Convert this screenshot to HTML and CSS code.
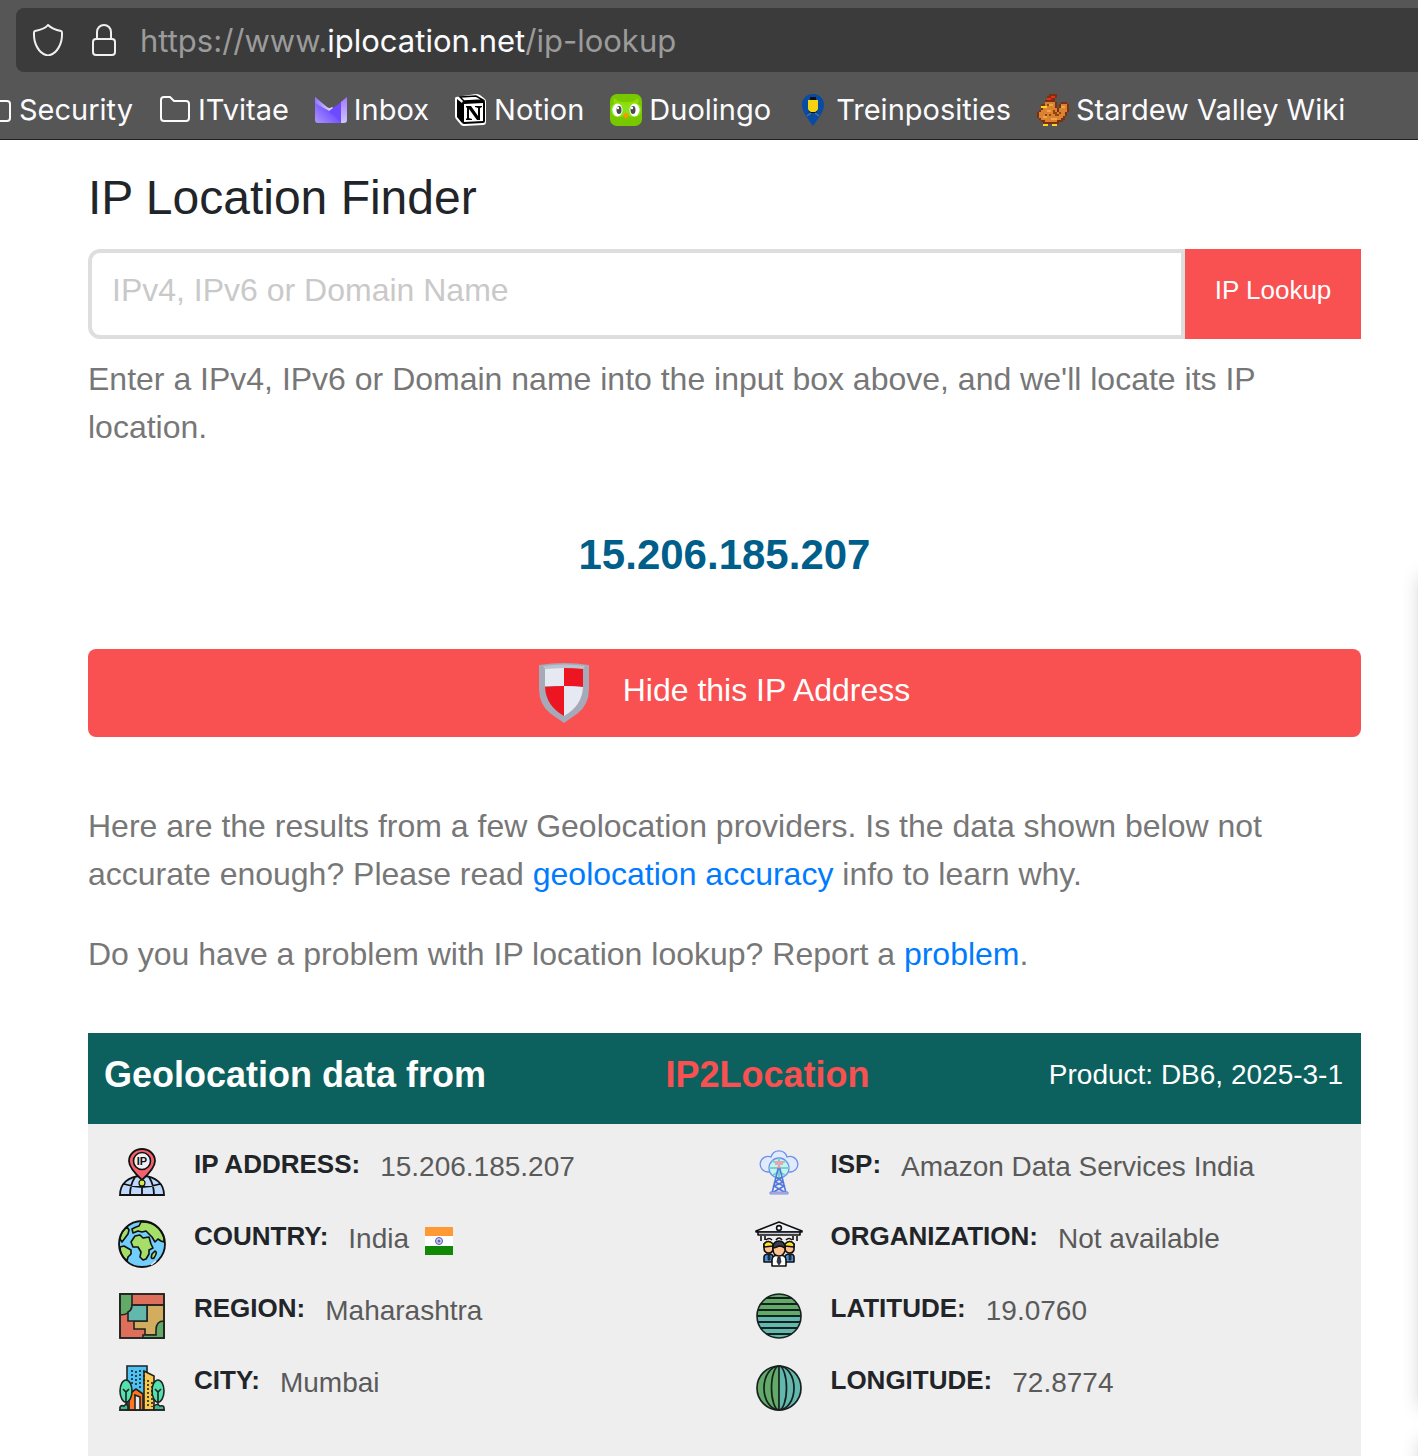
FILE: index.html
```html
<!DOCTYPE html>
<html lang="en">
<head>
<meta charset="utf-8">
<meta name="viewport" content="width=device-width, initial-scale=1">
<title>IP Location Finder</title>
<link rel="stylesheet" href="styles.css">
</head>
<body>
<header class="browser">
  <div class="urlbar">
    <svg class="url-icon" viewBox="0 0 32 32" fill="none" stroke="#f0f0f0" stroke-width="2" stroke-linejoin="round" aria-hidden="true"><path d="M16 1C13 5 8 6 3 7C1.5 7.500 2 9 2 11C2 20 7 29 14 31C15.300 31.500 16.700 31.500 18 31C25 29 30 20 30 11C30 9 30.500 7.500 29 7C24 6 19 4 16 1Z"/></svg>
    <svg class="url-icon" viewBox="0 0 32 32" fill="none" stroke="#f0f0f0" stroke-width="2" aria-hidden="true"><rect x="5" y="15" width="22" height="16" rx="3"/><path d="M9 15V8a7 7 0 0 1 14 0V15"/></svg>
    <span class="url">https://www.<b class="domain">iplocation.net</b>/ip-lookup</span>
  </div>
  <nav class="bookmarks" aria-label="Bookmarks">
    <a class="bookmark" href="#"><svg class="bm-clipped" viewBox="20 0 12 32" fill="none" stroke="#fbfbfe" stroke-width="2" aria-hidden="true"><path d="M2 24V6a3 3 0 0 1 3-3h6l4 4h12a3 3 0 0 1 3 3v14a3 3 0 0 1-3 3H5a3 3 0 0 1-3-3Z"/></svg>Security</a>
    <a class="bookmark" href="#"><svg class="bm-icon" viewBox="0 0 32 32" fill="none" stroke="#fbfbfe" stroke-width="2" aria-hidden="true"><path d="M2 24V6a3 3 0 0 1 3-3h6l4 4h12a3 3 0 0 1 3 3v14a3 3 0 0 1-3 3H5a3 3 0 0 1-3-3Z"/></svg>ITvitae</a>
    <a class="bookmark" href="#"><svg class="bm-icon" viewBox="0 0 32 32" aria-hidden="true"><defs><linearGradient id="mailLeft" x1="0" y1="1" x2="1" y2="0"><stop offset="0" stop-color="#ad96ff"/><stop offset=".6" stop-color="#6d4aff"/></linearGradient><linearGradient id="mailFold" x1="0" y1="0" x2="1" y2="0"><stop offset="0" stop-color="#8f75ff"/><stop offset="1" stop-color="#e6dcff"/></linearGradient><linearGradient id="mailRight" x1="0" y1="0" x2="0" y2="1"><stop offset="0" stop-color="#a07aff"/><stop offset="1" stop-color="#d0c4ff"/></linearGradient></defs><path d="M0 3V26a3 3 0 0 0 3 3H26V9L13 17Z" fill="url(#mailLeft)"/><path d="M0 3L12 13Q14.500 15 17 13L18 14L14 17L0 9Z" fill="url(#mailFold)"/><path d="M32 3L14 18L20 22L26 29V9Z" fill="#6d4aff"/><path d="M32 3V26a3 3 0 0 1-3 3H26V8Z" fill="url(#mailRight)"/></svg>Inbox</a>
    <a class="bookmark" href="#"><svg class="bm-icon" viewBox="0 0 32 32" aria-hidden="true"><path d="M1 3L21 0Q23 0 25 1L30 5Q31 6 31 7V28Q31 31 28 31L9 32Q7 32 6 31L1 25Q0 24 0 22V5Q0 3 1 3Z" fill="#fff"/><path d="M2 5L7 9V29L2 23Z"/><path d="M5 3L21 2L28 6L9 7Z" fill="#fff" stroke="#000" stroke-width="1.500"/><path d="M7 9Q7 7 9 7L28 6Q30 6 30 8V27Q30 29 28 29L9 30Q7 30 7 28Z"/><path d="M9 10L28 9V27L9 28Z" fill="#fff"/><path d="M11 12H16L23 22V14L20 13V12H27V13L25 14V26H22L14 15V24L17 25V26H11V25L12 24V14L11 13Z"/></svg>Notion</a>
    <a class="bookmark" href="#"><svg class="bm-icon" viewBox="0 0 32 32" aria-hidden="true"><rect width="32" height="32" rx="7" fill="#78c800"/><path d="M4 4Q8 8 13 8H19Q24 8 28 4Q30 8 26 12L16 16L6 12Q2 8 4 4Z" fill="#91dd00"/><path d="M1 15Q1 9 8 9Q13 9 16 12Q19 9 24 9Q31 9 31 15Q31 23 24 23Q18 23 16 20Q14 23 8 23Q1 23 1 15Z" fill="#89e219"/><ellipse cx="7.500" cy="16" rx="5" ry="6.500" fill="#fff"/><ellipse cx="24.500" cy="16" rx="5" ry="6.500" fill="#fff"/><ellipse cx="9" cy="16" rx="2.500" ry="4" fill="#4b4b4b"/><ellipse cx="23" cy="16" rx="2.500" ry="4" fill="#4b4b4b"/><circle cx="8" cy="14" r="1.200" fill="#fff"/><circle cx="22" cy="14" r="1.200" fill="#fff"/><path d="M13 21Q16 17 19 21L16 25Z" fill="#ff9600"/></svg>Duolingo</a>
    <a class="bookmark" href="#"><svg class="bm-icon" viewBox="0 0 32 32" aria-hidden="true"><path d="M16 0C9 0 5 5 5 11C5 18 12 26 16 32C20 26 27 18 27 11C27 5 23 0 16 0Z" fill="#064ba4"/><path d="M13 3H19V6H21V15L19 18H13L11 15V6H13Z" fill="#f5d311"/><path d="M13 3H19V6H13Z" fill="#111"/><path d="M12 17L14 18H18L20 17V18L18 19H14L12 18Z" fill="#111"/><path d="M14 19L10 22M18 19L22 22" stroke="#56718e" stroke-width="1.500"/></svg>Treinposities</a>
    <a class="bookmark" href="#"><svg class="bm-icon" viewBox="0 0 32 32" shape-rendering="crispEdges" aria-hidden="true"><path d="M12 0H20V4H18V8H20V14H22V10H24V8H30V10H32V18H30V22H28V26H26V28H22V30H6V28H4V26H2V24H0V18H2V16H4V10H8V6H10V2H12Z" fill="#7c3010"/><path d="M14 2H18V4H14V6H10V4H14Z" fill="#f22b13"/><path d="M8 8H18V14H20V18H22V14H24V10H30V18H28V22H26V24H24V26H20V28H8V26H4V24H2V18H4V16H6V12H8Z" fill="#d9822f"/><path d="M12 10H16V12H12ZM24 12H28V14H24ZM10 16H14V18H10ZM6 22H10V24H6ZM14 24H20V26H14Z" fill="#f2a345"/><path d="M10 10H12V12H10ZM16 16H18V18H20V20H22V18H24V20H22V22H18V20H16ZM8 20H10V22H8ZM12 20H14V22H12Z" fill="#93450f"/><path d="M4 12H10V14H4ZM6 30H11V32H6ZM15 30H20V32H15Z" fill="#ffd51b"/></svg>Stardew Valley Wiki</a>
  </nav>
</header>

<div class="page">
  <main class="content">
    <h1 class="title">IP Location Finder</h1>
    <form class="lookup">
      <input class="lookup-input" type="text" placeholder="IPv4, IPv6 or Domain Name" aria-label="IPv4, IPv6 or Domain Name">
      <button class="lookup-button" type="button">IP Lookup</button>
    </form>
    <p class="text">Enter a IPv4, IPv6 or Domain name into the input box above, and we'll locate its IP location.</p>
    <p class="ip">15.206.185.207</p>
    <button class="hide-button" type="button">
      <svg class="shield" viewBox="0 0 50 60" aria-hidden="true"><path d="M0 2Q25-2 50 2V26Q50 42 38 51Q32 55 25 60Q18 55 12 51Q0 42 0 26Z" fill="#a5a9b8"/><path d="M4 3Q25 0 46 3L44 6Q25 4 6 6Z" fill="#bcc3cf"/><path d="M6 6Q16 5 25 5V23H6Z" fill="#e6e9f1"/><path d="M25 5Q34 5 44 6V24Q34 23 25 23Z" fill="#ed1522"/><path d="M6 24Q16 23 25 23V53Q7 43 6 24Z" fill="#ed1522"/><path d="M25 23Q34 23 44 24Q43 43 25 53Z" fill="#e6e9f1"/></svg>
      <span class="hide-label">Hide this IP Address</span>
    </button>
    <p class="text">Here are the results from a few Geolocation providers. Is the data shown below not accurate enough? Please read <a class="link" href="#">geolocation accuracy</a> info to learn why.</p>
    <p class="text report">Do you have a problem with IP location lookup? Report a <a class="link" href="#">problem</a>.</p>

    <section class="results">
      <header class="results-head">
        <h2 class="results-title">Geolocation data from</h2>
        <strong class="provider">IP2Location</strong>
        <span class="product">Product: DB6, 2025-3-1</span>
      </header>
      <dl class="facts">
        <div class="fact">
          <svg class="fact-icon" viewBox="0 0 48 48" aria-hidden="true"><path d="M2 47C2 36 10 28 24 28S46 36 46 47Z" fill="#bed9fd"/><path d="M2 47C2 36 10 28 24 28S46 36 46 47ZM24 28V47M17 29Q12 37 12 47M31 29Q36 37 36 47M6 36Q24 42 42 36" fill="none" stroke="#111" stroke-width="1.800"/><path d="M24 32Q11 20 11 13A13 12 0 0 1 37 13Q37 20 24 32Z" fill="#f4616d" stroke="#111" stroke-width="1.800"/><circle cx="24" cy="13" r="8.500" fill="#f0f0f4" stroke="#111" stroke-width="1.600"/><circle cx="24" cy="35" r="3" fill="#d3ed42" stroke="#111" stroke-width="1.200"/><text class="pin-text" x="24" y="17" text-anchor="middle">IP</text></svg>
          <dt>IP ADDRESS:</dt><dd>15.206.185.207</dd>
        </div>
        <div class="fact">
          <svg class="fact-icon" viewBox="0 0 48 48" aria-hidden="true"><g fill="#e1ebff" stroke="#6e90ea" stroke-width="1.300"><path d="M14 24H13A7.800 7.800 0 1 1 16 9A8.300 8.300 0 0 1 32 9A7.800 7.800 0 1 1 35 24H34Z"/><circle cx="24" cy="20" r="10" fill="#c6f1ee"/></g><path d="M14 20H34M24 10V29M17 13Q24 17 31 13M18 27Q24 23 30 27" stroke="#6ed6cf" fill="none" stroke-width="2"/><path d="M20 13H28V17H20Z" fill="#eda3ab"/><circle cx="24" cy="20" r="2" fill="#f78f9d"/><path d="M23 21L17 45H31L25 21ZM21 29L28 34L19 38L31 45M27 29L20 34L29 38L17 45" fill="none" stroke="#5278dc" stroke-width="1.600"/><path d="M15 44H33V46H15Z" fill="#eab2c5" stroke="#6e90ea"/></svg>
          <dt>ISP:</dt><dd>Amazon Data Services India</dd>
        </div>
        <div class="fact">
          <svg class="fact-icon" viewBox="0 0 48 48" aria-hidden="true"><circle cx="24" cy="24" r="23" fill="#72cefa"/><g fill="#a5de69" stroke="#111" stroke-width="1.600" stroke-linejoin="round"><path d="M9 7L11 10L10 14L7 18L4 22L2 19Q3 12 9 7Z"/><path d="M23 2Q40 1 46 18V22L43 21L40 19L37 22L34 17L31 14L28 11L24 12L20 11L15 13L14 9L18 7L21 6Z"/><path d="M17 16L22 15L25 18L31 17L33 24L35 28L31 30L31 34L28 39L25 40L22 37L23 32L20 27L15 27L13 22Z"/><path d="M2 27L6 26L13 30V34L10 37L9 41Q2 35 2 27Z"/><path d="M37 31Q40 32 36 38Q32 40 34 34Z"/></g><circle cx="24" cy="24" r="23" fill="none" stroke="#111" stroke-width="1.800"/><path d="M33 45L38 41" stroke="#ededed" stroke-width="1.500"/></svg>
          <dt>COUNTRY:</dt><dd class="country">India <svg class="flag" viewBox="0 0 28 28" role="img" aria-label="Flag of India"><path d="M0 0H28V28H0Z" fill="#fff"/><path d="M0 0H28V9H0Z" fill="#ff9933"/><path d="M0 19H28V28H0Z" fill="#128807"/><circle cx="14" cy="14" r="3.500" fill="#d0d0ee" stroke="#5555aa"/><circle cx="14" cy="14" r="1.500" fill="#6666bb"/></svg></dd>
        </div>
        <div class="fact">
          <svg class="fact-icon" viewBox="0 0 48 48" aria-hidden="true"><g stroke="#111" stroke-width="1.600" stroke-linejoin="round"><path d="M1 11L24 2L47 11V12H1Z" fill="#eef1f5"/><path d="M3 12H45V15H3Z" fill="#c9ccd6"/><circle cx="24" cy="8" r="2.400" fill="#fff"/><path d="M6 16V21M10 16V20M38 16V20M42 16V21M11 20Q14 17 17 20M21 20Q24 16 27 20M31 20Q34 17 37 20" fill="none"/><path d="M9 42V37Q9 34 14 34Q18 34 18 37V42ZM30 42V37Q30 34 35 34Q39 34 39 37V42Z" fill="#4a91df"/><path d="M9 24Q13 19 18 24V30Q17 33 14 33Q9 33 9 28ZM30 24Q35 19 39 24V30Q38 33 35 33Q30 33 30 28Z" fill="#ffc28e"/><path d="M9 27V24Q13 19 18 24V26ZM30 26V24Q35 19 39 24V27Z" fill="#ffdf32"/><path d="M17 46V40Q17 35 24 35Q31 35 31 40V46Z" fill="#fff"/><path d="M18 26Q24 19 30 26V31Q28 36 24 36Q18 36 18 29Z" fill="#ffc28e"/><path d="M18 28Q18 21 24 21Q30 21 30 28Q27 26 24 26Q20 28 18 28Z" fill="#383d50"/><path d="M23 37H25L26 42L24 45L22 42ZM13 35H15V40H13ZM34 35H36V40H34Z" fill="#30394f" stroke-width=".7"/></g></svg>
          <dt>ORGANIZATION:</dt><dd>Not available</dd>
        </div>
        <div class="fact">
          <svg class="fact-icon" viewBox="0 0 48 48" aria-hidden="true"><g stroke="#222" stroke-width="1.600"><path d="M2 2H46V46H2Z" fill="#de705b"/><path d="M2 2H14V14Q13 23 2 23Z" fill="#62aa68"/><path d="M29 13H46V43H27V37H16V29H29Z" fill="#d2ad60"/><path d="M14 13H29V29H10V20Q14 18 14 13Z" fill="#62b8ad"/><path d="M46 29Q38 29 38 38V43H25V46H46Z" fill="#62aa68"/><path d="M15 13H46M2 2V46H46V2Z" fill="none"/></g></svg>
          <dt>REGION:</dt><dd>Maharashtra</dd>
        </div>
        <div class="fact">
          <svg class="fact-icon" viewBox="0 0 48 48" aria-hidden="true"><defs><clipPath id="disc"><circle cx="24" cy="24" r="22"/></clipPath></defs><g clip-path="url(#disc)"><path d="M0 0H48V24H0Z" fill="#62aa68"/><path d="M0 24H48V48H0Z" fill="#62b8ad"/><path d="M0 6H48M0 12H48M0 18H48M0 24H48M0 30H48M0 36H48M0 42H48" stroke="#18201f" stroke-width="1.800"/></g><circle cx="24" cy="24" r="22" fill="none" stroke="#18201f" stroke-width="1.600"/></svg>
          <dt>LATITUDE:</dt><dd>19.0760</dd>
        </div>
        <div class="fact">
          <svg class="fact-icon" viewBox="0 0 48 48" aria-hidden="true"><g stroke="#222" stroke-width="1.600"><path d="M9 2H29V46H9Z" fill="#4cc3f4"/><path d="M26 7L36 12V46H26Z" fill="#f9c94e"/><path d="M11 30L18 25L25 30V46H11Z" fill="#ff761c"/><path d="M17 31L22 33V46H17Z" fill="#e7e9ec"/><ellipse cx="8" cy="27" rx="6" ry="11" fill="#52e2ae"/><ellipse cx="40" cy="27" rx="6" ry="11" fill="#52e2ae"/><path d="M8 27V46M5 25L8 28L11 25M40 27V46M37 25L40 28L43 25" fill="none"/><path d="M2 46V43Q3 41 6 42Q8 39 10 42V46ZM36 46V42Q39 39 42 42Q46 41 46 44V46Z" fill="#40b991"/><path d="M1 46H47"/></g><path d="M14 6V20M18 7V23M22 6V24M26 7V20M30 16V43M34 18V43" stroke="#222" stroke-width="1.600" stroke-dasharray="2 2"/></svg>
          <dt>CITY:</dt><dd>Mumbai</dd>
        </div>
        <div class="fact">
          <svg class="fact-icon" viewBox="0 0 48 48" aria-hidden="true"><g clip-path="url(#disc)"><path d="M0 0H24V48H0Z" fill="#62aa68"/><path d="M24 0H48V48H24Z" fill="#62b8ad"/></g><g fill="none" stroke="#18201f" stroke-width="1.700"><circle cx="24" cy="24" r="22"/><ellipse cx="24" cy="24" rx="15" ry="22"/><ellipse cx="24" cy="24" rx="7.500" ry="22"/><path d="M24 2V46"/></g></svg>
          <dt>LONGITUDE:</dt><dd>72.8774</dd>
        </div>
      </dl>
    </section>
  </main>
  <aside class="side" aria-hidden="true">
    <div class="side-card"></div>
    <div class="side-card"></div>
  </aside>
</div>
</body>
</html>
```
FILE: styles.css
```css
* { box-sizing: border-box; }

body {
  margin: 0;
  min-height: 100vh;
  display: flex;
  flex-direction: column;
  overflow-x: hidden;
  background: #fff;
  color: #212529;
  font-family: "Liberation Sans", Arial, Helvetica, sans-serif;
}

/* Browser toolbar */
.browser {
  padding-top: 8px;
  background: #565656;
  border-bottom: 1px solid #202023;
  color: #fbfbfe;
  font-family: Inter, sans-serif;
  overflow: hidden;
}

.urlbar {
  display: flex;
  align-items: center;
  gap: 24px;
  height: 64px;
  margin-left: 16px;
  padding: 0 16px;
  border-radius: 8px 0 0 8px;
  background: #3b3b3b;
  font-size: 31px;
}

.url-icon { width: 32px; height: 32px; flex: none; }
.url { margin-left: -4px; color: #9b9b9b; white-space: nowrap; }
.domain { color: #fbfbfe; font-weight: 400; }

.bookmarks {
  display: flex;
  align-items: center;
  gap: 26px;
  height: 67px;
  padding-top: 8px;
  font-size: 29px;
}

.bookmark {
  display: flex;
  align-items: center;
  gap: 7px;
  color: inherit;
  text-decoration: none;
  white-space: nowrap;
}

.bm-icon { width: 32px; height: 32px; flex: none; }
.bm-clipped { width: 12px; height: 32px; flex: none; }

/* Page */
.page { display: flex; flex: 1; }

.content {
  display: flex;
  flex-direction: column;
  flex: 1;
  min-width: 0;
  padding: 29px 0 0 88px;
}

.title {
  margin: 0 0 23px;
  font-size: 48px;
  font-weight: 400;
  line-height: 57px;
}

.lookup { display: flex; height: 90px; margin-bottom: 16px; }

.lookup-input {
  flex: 1;
  min-width: 0;
  padding: 0 20px 8px;
  border: 4px solid #dedede;
  border-radius: 12px 0 0 12px;
  background: #fff;
  color: #495057;
  font: inherit;
  font-size: 32px;
}

.lookup-input::placeholder { color: #c9c9c9; opacity: 1; }

.lookup-button {
  width: 176px;
  padding: 0 0 8px;
  border: 0;
  background: #f95151;
  color: #fff;
  font: inherit;
  font-size: 26px;
}

.text {
  margin: 0;
  color: #777;
  font-size: 32px;
  line-height: 48px;
}

.link { color: #007bff; text-decoration: none; }

.ip {
  margin: 79px 0 69px;
  color: #005f8a;
  font-size: 42px;
  font-weight: 700;
  line-height: 50px;
  text-align: center;
}

.hide-button {
  display: flex;
  align-items: center;
  justify-content: center;
  gap: 34px;
  height: 88px;
  margin-bottom: 65px;
  padding: 0;
  border: 0;
  border-radius: 8px;
  background: #f95151;
  color: #fff;
  font: inherit;
  font-size: 32px;
}

.shield { width: 50px; height: 60px; }
.hide-label { padding-bottom: 6px; }

.report { margin: 32px 0 55px; }

/* Results */
.results { flex: 1; background: #eee; }

.results-head {
  display: flex;
  align-items: center;
  justify-content: space-between;
  min-height: 91px;
  padding: 0 18px 8px 16px;
  background: #0c615e;
  color: #fff;
}

.results-title { margin: 0; font-size: 36px; }
.provider { color: #f95151; font-size: 36px; }
.product { font-size: 28px; }

.facts {
  display: grid;
  grid-template-columns: 1fr 1fr;
  margin: 0;
  padding: 12px 0 36px;
}

.fact {
  display: flex;
  align-items: flex-start;
  min-height: 72px;
  padding: 12px 0 0 30px;
}

.fact-icon { width: 48px; height: 48px; flex: none; margin-right: 28px; }

.fact dt {
  margin-right: 20px;
  font-size: 26px;
  font-weight: 700;
  line-height: 32px;
}

.fact dd {
  margin: 0;
  color: #5a5a5a;
  font-size: 28px;
  line-height: 38px;
}

.country { display: flex; align-items: center; gap: 16px; }
.flag { width: 28px; height: 28px; margin-top: 4px; }
.pin-text { font-size: 11px; font-weight: 700; fill: #111; }

/* Right gutter: soft shadows along the window edge */
.side {
  display: flex;
  flex: 0 0 57px;
  flex-direction: column;
  align-items: flex-end;
  gap: 52px;
  padding-top: 446px;
}

.side-card {
  width: 1px;
  height: 812px;
  background: #ebebeb;
  box-shadow: 14px 0 20px 10px rgba(0, 0, 0, .2);
}

.side-card + .side-card { flex: 1; height: auto; }
```
